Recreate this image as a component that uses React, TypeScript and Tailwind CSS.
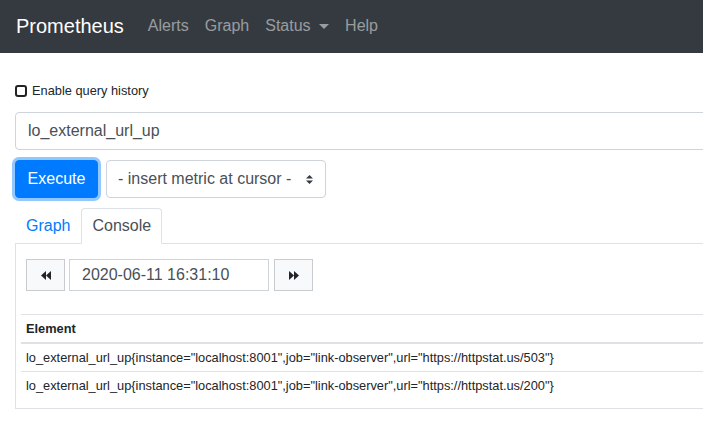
import React from "react";

function Backward() {
  return (
    <svg width="10" height="9" viewBox="0 0 10 9" className="block">
      <polygon points="5,0 0,4.5 5,9" fill="#212529" />
      <polygon points="10,0 5,4.5 10,9" fill="#212529" />
    </svg>
  );
}

function Forward() {
  return (
    <svg width="10" height="9" viewBox="0 0 10 9" className="block">
      <polygon points="0,0 5,4.5 0,9" fill="#212529" />
      <polygon points="5,0 10,4.5 5,9" fill="#212529" />
    </svg>
  );
}

const rowText = [
  'lo_external_url_up{instance="localhost:8001",job="link-observer",url="https://httpstat.us/503"}',
  'lo_external_url_up{instance="localhost:8001",job="link-observer",url="https://httpstat.us/200"}',
];

export default function App() {
  return (
    <div className="w-[703px] h-[438px] overflow-hidden bg-white text-[#212529] font-['Liberation_Sans',Arial,sans-serif]">
      <nav className="h-[53px] w-full bg-[#343a40] flex items-center px-4 pb-px">
        <span className="text-[20px] leading-[30px] text-white mr-4">Prometheus</span>
        <span className="px-2 text-[16px] leading-6 text-white/50">Alerts</span>
        <span className="px-2 text-[16px] leading-6 text-white/50">Graph</span>
        <span className="px-2 text-[16px] leading-6 text-white/50 flex items-center">
          Status
          <span className="ml-[8.5px] w-0 h-0 border-t-[5px] border-t-white/50 border-x-[5px] border-x-transparent" />
        </span>
        <span className="px-2 text-[16px] leading-6 text-white/50">Help</span>
      </nav>

      <div className="w-[780px] px-[15px]">
        <div className="mt-[28px] h-[19px] flex items-center text-[12.8px]">
          <span className="w-[12px] h-[12px] border-2 border-[#222] rounded-[3px] bg-white mr-[5px]" />
          <span>Enable query history</span>
        </div>

        <div className="mt-[12px] h-[38px] border border-[#ced4da] rounded-[4px] flex items-center px-[12px] text-[16px] text-[#495057]">
          lo_external_url_up
        </div>

        <div className="mt-[10px] flex items-center">
          <div className="h-[38px] w-[83px] bg-[#007bff] border border-[#007bff] rounded-[4px] text-white text-[16px] flex items-center justify-center shadow-[0_0_0_3px_rgba(38,143,255,0.5)]">
            Execute
          </div>
          <div className="ml-[8px] h-[38px] w-[220px] border border-[#ced4da] rounded-[4px] flex items-center justify-between pl-[11px] pr-[12px] text-[16px] text-[#495057]">
            <span>- insert metric at cursor -</span>
            <svg width="7" height="9" viewBox="0 0 7 9" className="block">
              <polygon points="0,3.6 3.5,0 7,3.6" fill="#343a40" />
              <polygon points="0,5.4 3.5,9 7,5.4" fill="#343a40" />
            </svg>
          </div>
        </div>

        <div className="mt-[10px] flex border-b border-[#dee2e6] h-[36px]">
          <div className="px-[10px] py-[5px] border border-transparent text-[16px] leading-6 text-[#007bff]">Graph</div>
          <div className="px-[10px] py-[5px] border border-[#dee2e6] border-b-white rounded-t-[4px] bg-white text-[16px] leading-6 text-[#495057] -mb-px">
            Console
          </div>
        </div>

        <div className="border-x border-b border-[#dee2e6] px-[5px] pt-[15px] pb-[8px]">
          <div className="flex items-center ml-[5px]">
            <div className="w-[39px] h-[32px] bg-[#f8f9fa] border border-[#c8cbcf] flex items-center justify-center">
              <Backward />
            </div>
            <div className="ml-[4px] w-[200px] h-[32px] border border-[#ced4da] flex items-center pl-[12px] text-[16px] text-[#495057]">
              2020-06-11 16:31:10
            </div>
            <div className="ml-[5px] w-[39px] h-[32px] bg-[#f8f9fa] border border-[#c8cbcf] flex items-center justify-center">
              <Forward />
            </div>
          </div>

          <div className="mt-[23px] text-[12.8px]">
            <div className="border-t border-[#dee2e6] h-[28px] px-[5px] flex items-center font-bold">Element</div>
            <div className="border-t-2 border-[#dee2e6] h-[29px] px-[5px] flex items-center whitespace-nowrap">{rowText[0]}</div>
            <div className="border-t border-[#dee2e6] h-[29px] px-[5px] flex items-center whitespace-nowrap">{rowText[1]}</div>
          </div>
        </div>
      </div>
    </div>
  );
}
